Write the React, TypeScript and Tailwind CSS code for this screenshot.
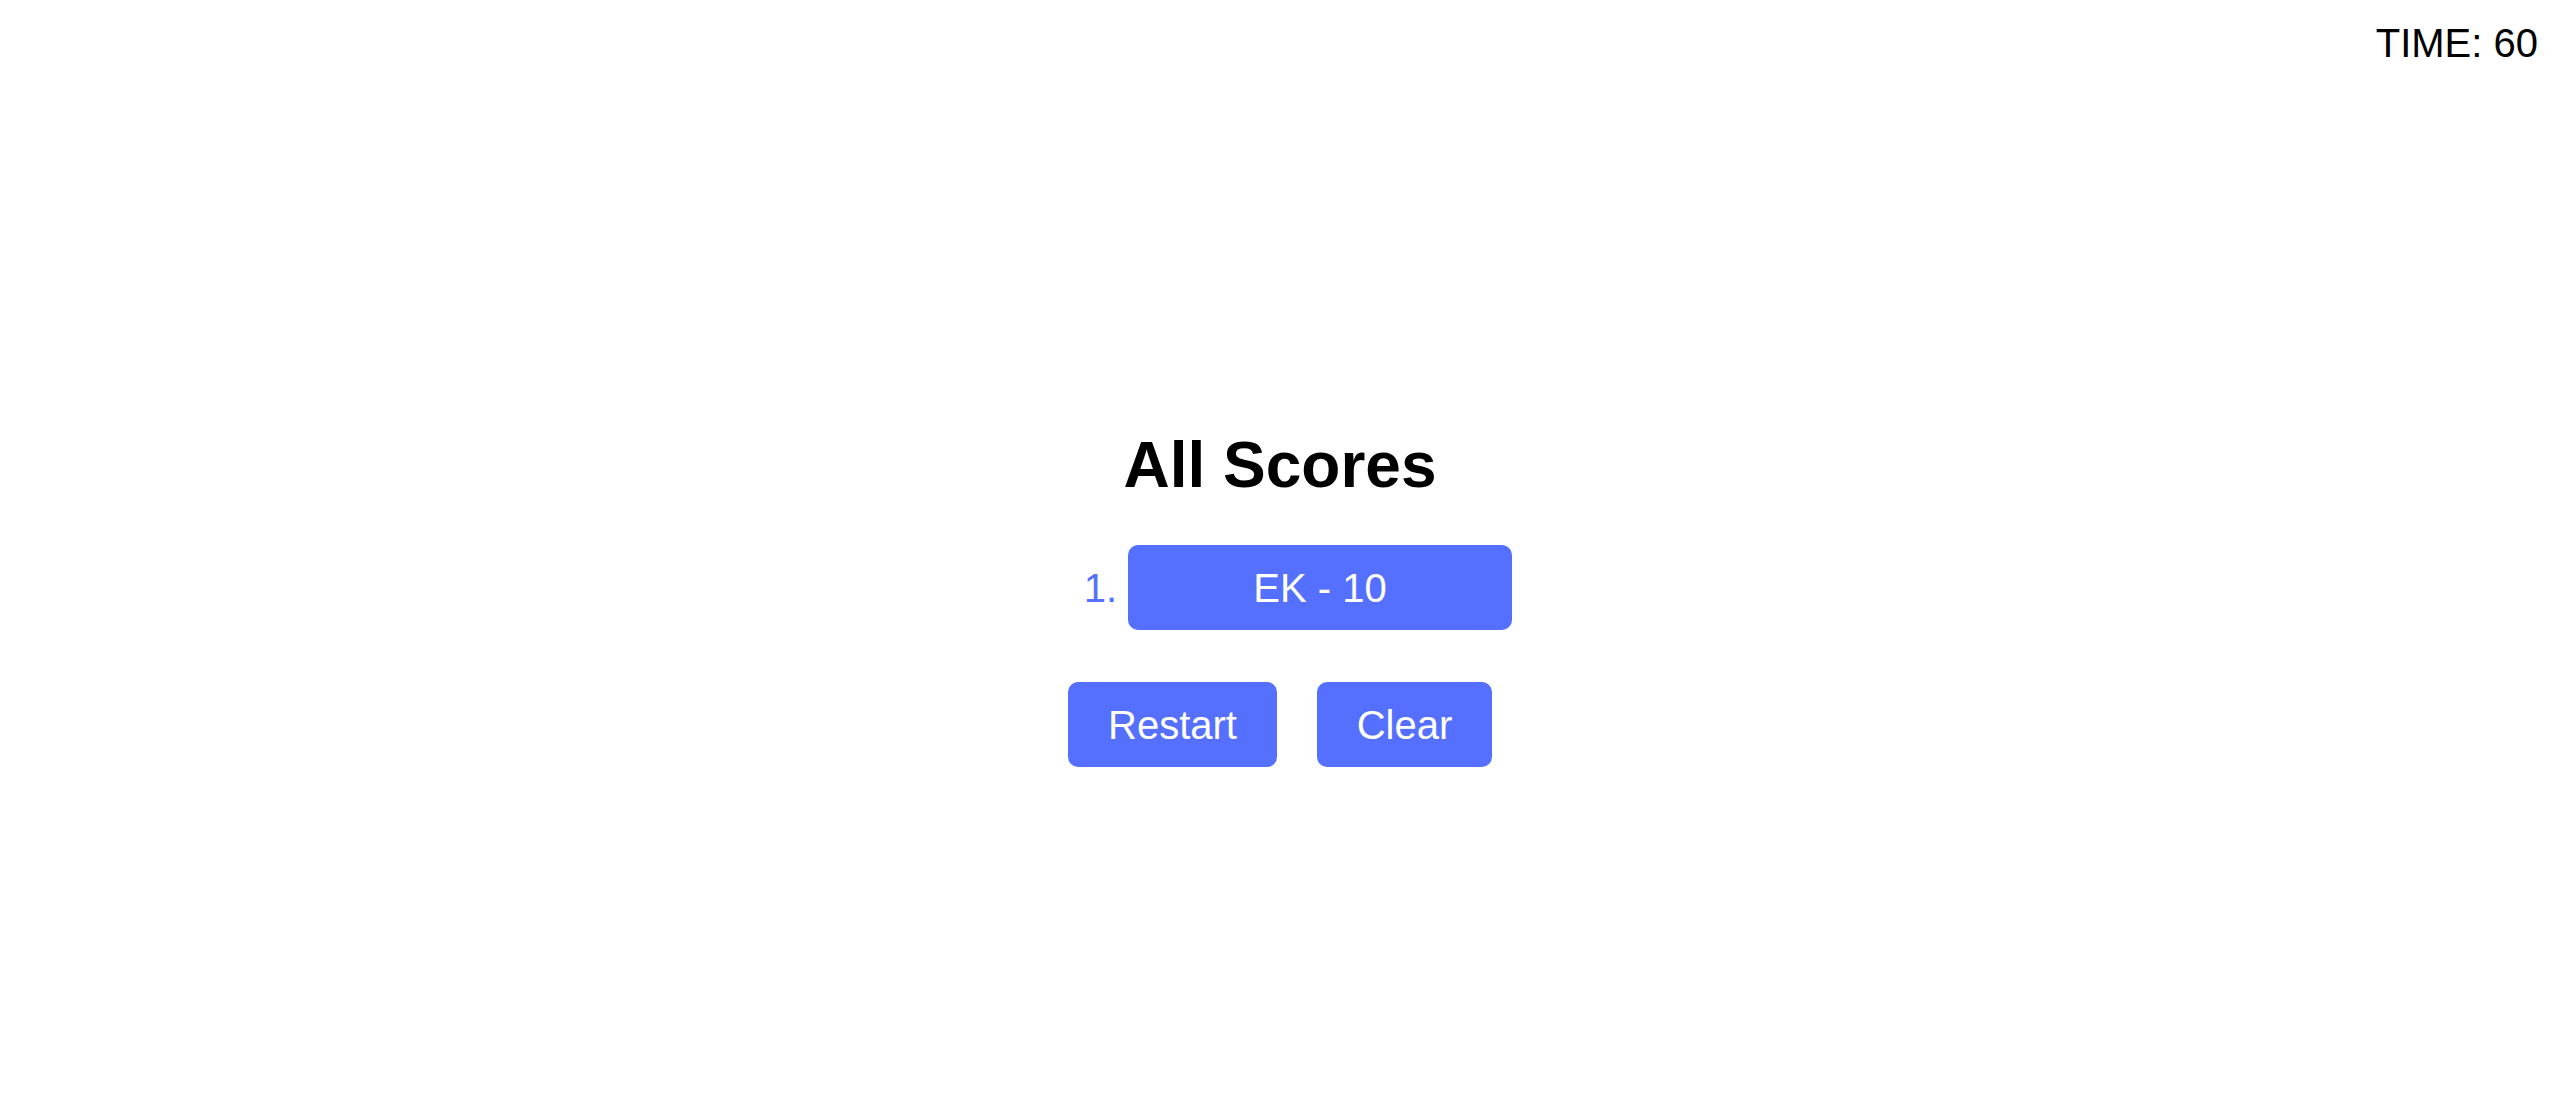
import React from "react";

export default function App() {
  const blue = "bg-[#5570ff]";
  return (
    <div className="min-h-screen w-full bg-white text-black" style={{ fontFamily: '"Liberation Sans", Arial, sans-serif' }}>
      <div className="flex justify-end pt-[20px] pr-[22px]">
        <div className="text-[40px] leading-[46px]">TIME: 60</div>
      </div>
      <div className="flex flex-col items-center pt-[362px]">
        <h1 className="text-[64px] leading-[74px] font-bold">All Scores</h1>
        <div className="mt-[43px] flex w-[464px]">
          <div className="w-[80px] pr-[11px] text-right text-[40px] text-[#5570ff] flex items-center justify-end h-[85px]">1.</div>
          <div className={`${blue} w-[384px] h-[85px] rounded-[10px] flex items-center justify-center text-white text-[40px]`}>EK - 10</div>
        </div>
        <div className="mt-[52px] flex gap-[40px]">
          <button className={`${blue} w-[209px] h-[85px] rounded-[10px] text-white text-[40px] flex items-center justify-center`}>Restart</button>
          <button className={`${blue} w-[175px] h-[85px] rounded-[10px] text-white text-[40px] flex items-center justify-center`}>Clear</button>
        </div>
      </div>
    </div>
  );
}
